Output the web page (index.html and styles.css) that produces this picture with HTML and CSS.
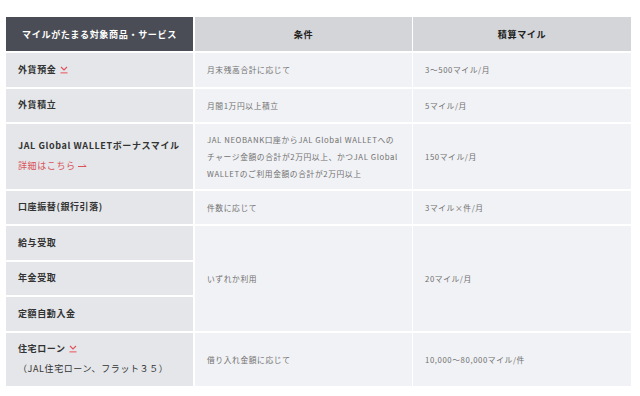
FILE: index.html
```html
<!DOCTYPE html>
<html lang="ja">
<head>
<meta charset="utf-8">
<link rel="stylesheet" href="styles.css">
</head>
<body>
<div class="wrap">
<table class="mile-table">
  <colgroup>
    <col class="c1"><col class="c2"><col class="c3">
  </colgroup>
  <thead>
    <tr>
      <th class="h-main">マイルがたまる対象商品・サービス</th>
      <th class="h-sub h-mid">条件</th>
      <th class="h-sub h-last">積算マイル</th>
    </tr>
  </thead>
  <tbody>
    <tr>
      <td class="name">外貨預金 <svg class="dl" width="8" height="8" viewBox="0 0 8 8"><polyline points="1,1 4,4 7,1" fill="none" stroke="#e0505a" stroke-width="1.1"/><rect x="0.5" y="6" width="7" height="1.6" fill="#e88a90"/></svg></td>
      <td class="cond">月末残高合計に応じて</td>
      <td class="mile">3～500マイル/月</td>
    </tr>
    <tr>
      <td class="name">外貨積立</td>
      <td class="cond">月間1万円以上積立</td>
      <td class="mile">5マイル/月</td>
    </tr>
    <tr>
      <td class="name">
        <div>JAL Global WALLETボーナスマイル</div>
        <a class="more">詳細はこちら <svg class="arr" width="9" height="6" viewBox="0 0 9 6"><path d="M0 4.5H8L6 2.5" fill="none" stroke="#d9535b" stroke-width="1"/></svg></a>
      </td>
      <td class="cond">JAL NEOBANK口座からJAL Global WALLETへのチャージ金額の合計が2万円以上、かつJAL Global WALLETのご利用金額の合計が2万円以上</td>
      <td class="mile">150マイル/月</td>
    </tr>
    <tr>
      <td class="name">口座振替(銀行引落)</td>
      <td class="cond">件数に応じて</td>
      <td class="mile">3マイル×件/月</td>
    </tr>
    <tr>
      <td class="name">給与受取</td>
      <td class="cond" rowspan="3">いずれか利用</td>
      <td class="mile" rowspan="3">20マイル/月</td>
    </tr>
    <tr>
      <td class="name">年金受取</td>
    </tr>
    <tr>
      <td class="name">定額自動入金</td>
    </tr>
    <tr>
      <td class="name">
        <div>住宅ローン <svg class="dl" width="8" height="8" viewBox="0 0 8 8"><polyline points="1,1 4,4 7,1" fill="none" stroke="#e0505a" stroke-width="1.1"/><rect x="0.5" y="6" width="7" height="1.6" fill="#e88a90"/></svg></div>
        <div class="note">（JAL住宅ローン、フラット３５）</div>
      </td>
      <td class="cond">借り入れ金額に応じて</td>
      <td class="mile">10,000～80,000マイル/件</td>
    </tr>
  </tbody>
</table>
</div>
</body>
</html>
```
FILE: styles.css
```css
html, body {
  margin: 0;
  padding: 0;
  background: #fff;
}
body {
  font-family: "Noto Sans CJK JP", "Noto Sans", sans-serif;
}
.wrap {
  padding: 17px 9px 0 6px;
}
.mile-table {
  width: 625px;
  table-layout: fixed;
  border-collapse: separate;
  border-spacing: 0;
}
.c1 { width: 187px; }
.c2 { width: 219px; }
.c3 { width: 219px; }

.mile-table th,
.mile-table td {
  padding: 6.75px 12px;
  line-height: 20px;
  vertical-align: middle;
  text-align: left;
}
.mile-table th {
  padding: 7px 12px;
  font-size: 9.1px;
  letter-spacing: 0.6px;
  font-weight: 700;
  text-align: center;
}
.h-main {
  background: #4a4d55;
  color: #fff;
}
.h-sub {
  background: #d3d5d8;
  color: #222;
  border-left: 2px solid #fff;
}
.h-last {
  border-left-width: 1px;
}
.mile-table td {
  border-top: 2px solid #fff;
}
.name {
  background: #e4e6e9;
  color: #333;
  font-size: 9px;
  letter-spacing: 0.6px;
  font-weight: 700;
}
.cond, .mile {
  background: #f1f2f5;
  color: #707070;
  font-size: 7.75px;
  letter-spacing: 0.6px;
  line-height: 17px !important;
}
.cond {
  border-left: 2px solid #fff;
}
.mile {
  border-left: 1px solid #fff;
}
.dl {
  vertical-align: -1px;
  margin-left: 1px;
}
.more {
  display: block;
  color: #d9535b;
  font-weight: 400;
  text-decoration: none;
}
.arr {
  vertical-align: 1px;
}
.note {
  font-weight: 400;
}
```
